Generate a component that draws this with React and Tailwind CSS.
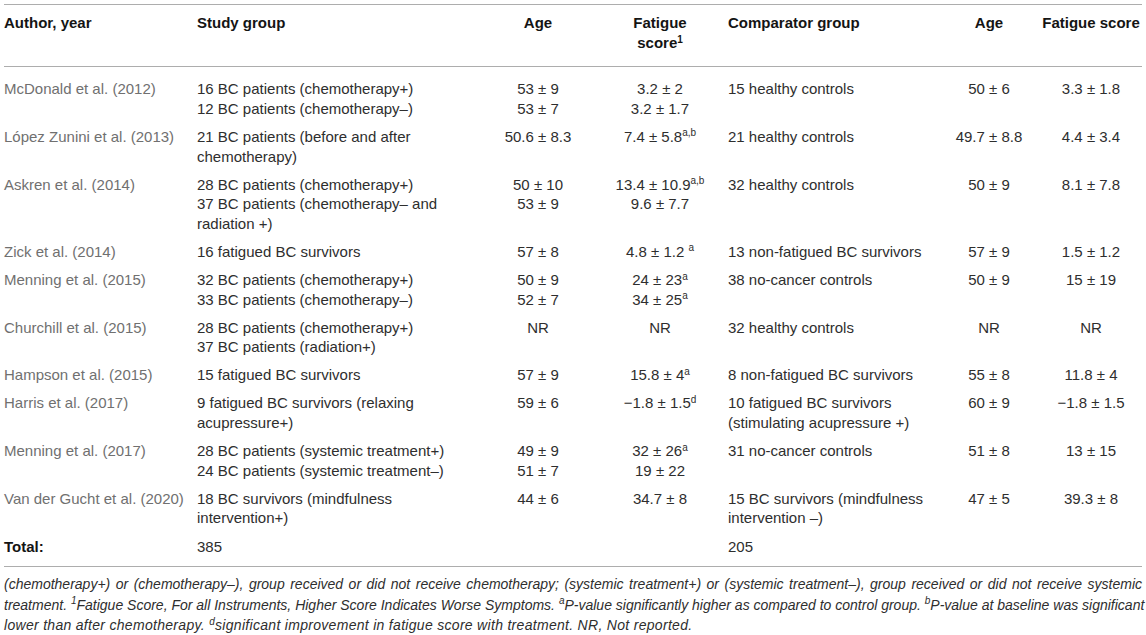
import React from "react";

const GRID = "grid grid-cols-[193px_281px_120px_124px_216px_102px_102px]";

const S = ({ children }) => <sup className="text-[10px] top-[-0.55em]">{children}</sup>;

const rows = [
  {
    a: "McDonald et al. (2012)",
    s: ["16 BC patients (chemotherapy+)", "12 BC patients (chemotherapy–)"],
    age: ["53 ± 9", "53 ± 7"],
    fat: ["3.2 ± 2", "3.2 ± 1.7"],
    c: ["15 healthy controls"],
    age2: ["50 ± 6"],
    fat2: ["3.3 ± 1.8"],
  },
  {
    a: "López Zunini et al. (2013)",
    s: ["21 BC patients (before and after", "chemotherapy)"],
    age: ["50.6 ± 8.3"],
    fat: [<>7.4 ± 5.8<S>a,b</S></>],
    c: ["21 healthy controls"],
    age2: ["49.7 ± 8.8"],
    fat2: ["4.4 ± 3.4"],
  },
  {
    a: "Askren et al. (2014)",
    s: ["28 BC patients (chemotherapy+)", "37 BC patients (chemotherapy– and", "radiation +)"],
    age: ["50 ± 10", "53 ± 9"],
    fat: [<>13.4 ± 10.9<S>a,b</S></>, "9.6 ± 7.7"],
    c: ["32 healthy controls"],
    age2: ["50 ± 9"],
    fat2: ["8.1 ± 7.8"],
  },
  {
    a: "Zick et al. (2014)",
    s: ["16 fatigued BC survivors"],
    age: ["57 ± 8"],
    fat: [<>4.8 ± 1.2 <S>a</S></>],
    c: ["13 non-fatigued BC survivors"],
    age2: ["57 ± 9"],
    fat2: ["1.5 ± 1.2"],
  },
  {
    a: "Menning et al. (2015)",
    s: ["32 BC patients (chemotherapy+)", "33 BC patients (chemotherapy–)"],
    age: ["50 ± 9", "52 ± 7"],
    fat: [<>24 ± 23<S>a</S></>, <>34 ± 25<S>a</S></>],
    c: ["38 no-cancer controls"],
    age2: ["50 ± 9"],
    fat2: ["15 ± 19"],
  },
  {
    a: "Churchill et al. (2015)",
    s: ["28 BC patients (chemotherapy+)", "37 BC patients (radiation+)"],
    age: ["NR"],
    fat: ["NR"],
    c: ["32 healthy controls"],
    age2: ["NR"],
    fat2: ["NR"],
  },
  {
    a: "Hampson et al. (2015)",
    s: ["15 fatigued BC survivors"],
    age: ["57 ± 9"],
    fat: [<>15.8 ± 4<S>a</S></>],
    c: ["8 non-fatigued BC survivors"],
    age2: ["55 ± 8"],
    fat2: ["11.8 ± 4"],
  },
  {
    a: "Harris et al. (2017)",
    s: ["9 fatigued BC survivors (relaxing", "acupressure+)"],
    age: ["59 ± 6"],
    fat: [<>−1.8 ± 1.5<S>d</S></>],
    c: ["10 fatigued BC survivors", "(stimulating acupressure +)"],
    age2: ["60 ± 9"],
    fat2: ["−1.8 ± 1.5"],
  },
  {
    a: "Menning et al. (2017)",
    s: ["28 BC patients (systemic treatment+)", "24 BC patients (systemic treatment–)"],
    age: ["49 ± 9", "51 ± 7"],
    fat: [<>32 ± 26<S>a</S></>, "19 ± 22"],
    c: ["31 no-cancer controls"],
    age2: ["51 ± 8"],
    fat2: ["13 ± 15"],
  },
  {
    a: "Van der Gucht et al. (2020)",
    s: ["18 BC survivors (mindfulness", "intervention+)"],
    age: ["44 ± 6"],
    fat: ["34.7 ± 8"],
    c: ["15 BC survivors (mindfulness", "intervention –)"],
    age2: ["47 ± 5"],
    fat2: ["39.3 ± 8"],
  },
];

function Lines({ items, className }) {
  return (
    <div className={className}>
      {items.map((t, i) => (
        <div key={i} className="whitespace-nowrap">
          {t}
        </div>
      ))}
    </div>
  );
}

export default function App() {
  return (
    <div
      className="bg-white w-[1146px] h-[635px] overflow-hidden pt-[4px] pl-[4px] text-[15px] text-[#2e2e2e]"
      style={{ fontFamily: '"Liberation Sans", Arial, Helvetica, sans-serif' }}
    >
      <div className="w-[1138px]">
        {/* Header */}
        <div className={`${GRID} border-t border-b border-[#adadad] pt-[8px] pb-[13px] leading-[20px] font-bold text-[#141414]`}>
          <div>Author, year</div>
          <div>Study group</div>
          <div className="text-center">Age</div>
          <div className="text-center">
            Fatigue
            <br />
            score<S>1</S>
          </div>
          <div className="pl-[6px]">Comparator group</div>
          <div className="text-center">Age</div>
          <div className="text-center whitespace-nowrap">Fatigue score</div>
        </div>

        {/* Body */}
        <div className="pt-[8px] pb-[6px] leading-[19.6px]">
          {rows.map((r, i) => (
            <div key={i} className={`${GRID} py-[4.25px]`}>
              <div className="text-[#707070] whitespace-nowrap">{r.a}</div>
              <Lines items={r.s} />
              <Lines items={r.age} className="text-center" />
              <Lines items={r.fat} className="text-center" />
              <Lines items={r.c} className="pl-[6px]" />
              <Lines items={r.age2} className="text-center" />
              <Lines items={r.fat2} className="text-center" />
            </div>
          ))}
          <div className={`${GRID} py-[4.25px]`}>
            <div className="font-bold text-[#141414]">Total:</div>
            <div>385</div>
            <div />
            <div />
            <div className="pl-[6px]">205</div>
            <div />
            <div />
          </div>
        </div>

        {/* Footnote */}
        <div className="border-t border-[#adadad] pt-[7px] italic text-[14px] leading-[20.5px] text-[#2e2e2e]">
          <div className="text-justify [text-align-last:justify] whitespace-nowrap">
            (chemotherapy+) or (chemotherapy–), group received or did not receive chemotherapy; (systemic treatment+) or (systemic treatment–), group received or did not receive systemic
          </div>
          <div className="text-justify [text-align-last:justify] whitespace-nowrap">
            treatment. <S>1</S>Fatigue Score, For all Instruments, Higher Score Indicates Worse Symptoms. <S>a</S>P-value significantly higher as compared to control group. <S>b</S>P-value at baseline was significant
          </div>
          <div className="whitespace-nowrap tracking-[0.3px]">
            lower than after chemotherapy. <S>d</S>significant improvement in fatigue score with treatment. NR, Not reported.
          </div>
        </div>
      </div>
    </div>
  );
}
